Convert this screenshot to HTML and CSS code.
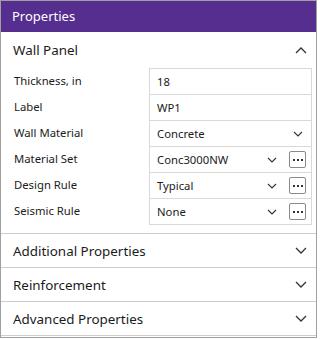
FILE: index.html
```html
<!DOCTYPE html>
<html>
<head>
<meta charset="utf-8">
<link rel="stylesheet" href="styles.css">
</head>
<body>
<div class="panel">
  <div class="title">Properties</div>
  <section class="section open">
    <div class="sec-head">
      <span class="sec-title">Wall Panel</span>
      <svg class="chev" width="12" height="7" viewBox="0 0 12 7"><path d="M1 6 L6 1 L11 6" fill="none" stroke="#333" stroke-width="1.3"/></svg>
    </div>
    <div class="grid">
      <div class="label">Thickness, in</div>
      <div class="cell"><span class="val">18</span></div>
      <div class="label">Label</div>
      <div class="cell"><span class="val">WP1</span></div>
      <div class="label">Wall Material</div>
      <div class="cell"><span class="val">Concrete</span>
        <svg class="dd dd-wide" width="10" height="6" viewBox="0 0 10 6"><path d="M1 1 L5 5 L9 1" fill="none" stroke="#333" stroke-width="1.1"/></svg>
      </div>
      <div class="label">Material Set</div>
      <div class="cell"><span class="val">Conc3000NW</span>
        <svg class="dd" width="10" height="6" viewBox="0 0 10 6"><path d="M1 1 L5 5 L9 1" fill="none" stroke="#333" stroke-width="1.1"/></svg>
        <span class="more"><i></i><i></i><i></i></span>
      </div>
      <div class="label">Design Rule</div>
      <div class="cell"><span class="val">Typical</span>
        <svg class="dd" width="10" height="6" viewBox="0 0 10 6"><path d="M1 1 L5 5 L9 1" fill="none" stroke="#333" stroke-width="1.1"/></svg>
        <span class="more"><i></i><i></i><i></i></span>
      </div>
      <div class="label">Seismic Rule</div>
      <div class="cell last"><span class="val">None</span>
        <svg class="dd" width="10" height="6" viewBox="0 0 10 6"><path d="M1 1 L5 5 L9 1" fill="none" stroke="#333" stroke-width="1.1"/></svg>
        <span class="more"><i></i><i></i><i></i></span>
      </div>
    </div>
  </section>
  <section class="section">
    <div class="sec-head closed">
      <span class="sec-title">Additional Properties</span>
      <svg class="chev" width="12" height="7" viewBox="0 0 12 7"><path d="M1 1 L6 6 L11 1" fill="none" stroke="#333" stroke-width="1.3"/></svg>
    </div>
  </section>
  <section class="section">
    <div class="sec-head closed">
      <span class="sec-title">Reinforcement</span>
      <svg class="chev" width="12" height="7" viewBox="0 0 12 7"><path d="M1 1 L6 6 L11 1" fill="none" stroke="#333" stroke-width="1.3"/></svg>
    </div>
  </section>
  <section class="section">
    <div class="sec-head closed">
      <span class="sec-title">Advanced Properties</span>
      <svg class="chev" width="12" height="7" viewBox="0 0 12 7"><path d="M1 1 L6 6 L11 1" fill="none" stroke="#333" stroke-width="1.3"/></svg>
    </div>
  </section>
</div>
</body>
</html>
```

FILE: styles.css
```css
html, body {
  margin: 0;
  padding: 0;
  background: #ffffff;
}
body {
  font-family: "Segoe UI", "Noto Sans", "Open Sans", sans-serif;
  color: #1b1b1b;
}
.panel {
  box-sizing: border-box;
  width: 317px;
  height: 338px;
  border: 1px solid #a0a0a0;
  background: #fff;
}
.title {
  height: 31px;
  background: #562e8f;
  color: #fff;
  font-size: 13px;
  line-height: 30px;
  padding-left: 11px;
}
.section {
  border-bottom: 1px solid #cdcdcd;
}
.section.open {
  padding-bottom: 8px;
}
.sec-head {
  height: 36px;
  display: flex;
  align-items: center;
  justify-content: space-between;
  padding: 0 9px 0 12px;
}
.sec-head.closed {
  height: 33px;
}
.sec-title {
  font-size: 13.4px;
}
.chev {
  display: block;
}
.grid {
  display: grid;
  grid-template-columns: 135px 163px;
  padding-left: 13px;
}
.label {
  font-size: 11.3px;
  height: 26px;
  line-height: 26px;
}
.cell {
  box-sizing: border-box;
  height: 26px;
  border: 1px solid #d9d9d9;
  border-bottom: none;
  display: flex;
  align-items: center;
  padding-left: 7px;
  font-size: 11.3px;
}
.cell.last {
  height: 27px;
  border-bottom: 1px solid #d9d9d9;
}
.val {
  flex: 1;
}
.dd {
  display: block;
  margin-right: 12px;
}
.dd-wide {
  margin-right: 8px;
}
.more {
  box-sizing: border-box;
  width: 17px;
  height: 17px;
  border: 1px solid #8a8a8a;
  border-radius: 2px;
  display: flex;
  align-items: center;
  justify-content: center;
  gap: 2px;
  margin-right: 5px;
}
.more i {
  display: block;
  width: 2px;
  height: 2px;
  background: #333;
}
```
